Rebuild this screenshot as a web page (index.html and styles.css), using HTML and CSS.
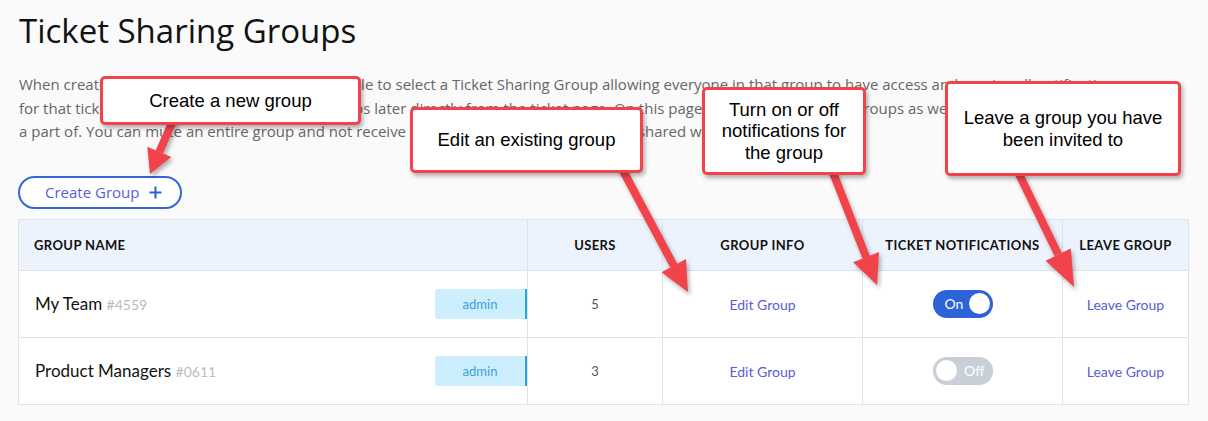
FILE: index.html
```html
<!DOCTYPE html>
<html lang="en">
<head>
    <meta charset="UTF-8">
    <meta name="viewport" content="width=device-width, initial-scale=1.0">
    <title>Ticket Sharing Groups</title>
    <link rel="stylesheet" href="styles.css">
</head>
<body>
    <main class="page">
        <h1 class="title">Ticket Sharing Groups</h1>
        <p class="intro">When creating any new ticket, you will now be able to select a Ticket Sharing Group allowing everyone in that group to have access and receive all notifications<br>
            for that ticket. You can always add users to groups later directly from the ticket page. On this page you can view all your groups as well as the groups that you are<br>
            a part of. You can mute an entire group and not receive notifications for all of the tickets shared with that group.</p>

        <button class="create-btn" type="button">
            Create Group
            <svg width="13" height="13" viewBox="0 0 13 13"><path d="M6.5 0.5v12M0.5 6.5h12" stroke="#2f5fcf" stroke-width="2" fill="none"/></svg>
        </button>

        <table class="groups">
            <colgroup>
                <col class="col-name">
                <col class="col-users">
                <col class="col-info">
                <col class="col-notify">
                <col class="col-leave">
            </colgroup>
            <thead>
                <tr>
                    <th class="th-name">Group Name</th>
                    <th>Users</th>
                    <th>Group Info</th>
                    <th>Ticket Notifications</th>
                    <th>Leave Group</th>
                </tr>
            </thead>
            <tbody>
                <tr>
                    <td class="cell-name">
                        <div class="name-wrap">
                            <span class="group-name">My Team <span class="group-id">#4559</span></span>
                            <span class="role">admin</span>
                        </div>
                    </td>
                    <td class="users">5</td>
                    <td><a class="link" href="#">Edit Group</a></td>
                    <td><span class="toggle on"><span class="toggle-label">On</span><span class="knob"></span></span></td>
                    <td><a class="link" href="#">Leave Group</a></td>
                </tr>
                <tr>
                    <td class="cell-name">
                        <div class="name-wrap">
                            <span class="group-name">Product Managers <span class="group-id">#0611</span></span>
                            <span class="role">admin</span>
                        </div>
                    </td>
                    <td class="users">3</td>
                    <td><a class="link" href="#">Edit Group</a></td>
                    <td><span class="toggle off"><span class="knob"></span><span class="toggle-label">Off</span></span></td>
                    <td><a class="link" href="#">Leave Group</a></td>
                </tr>
            </tbody>
        </table>
    </main>

    <!-- help overlay: arrows first, boxes on top -->
    <svg class="arrows" width="1208" height="421" viewBox="0 0 1208 421">
        <g stroke="#f2434b" stroke-width="8" fill="none">
            <line x1="174.5" y1="117" x2="159.3" y2="152"/>
            <line x1="620" y1="165" x2="673.7" y2="265.6"/>
            <line x1="830" y1="165" x2="866.1" y2="257.1"/>
            <line x1="1017" y1="170" x2="1058.2" y2="254.6"/>
        </g>
        <g fill="#f2434b">
            <polygon points="150,174 171.3,157 147.3,146.8"/>
            <polygon points="688,292 686,258.9 661.4,272.3"/>
            <polygon points="877,285 879.1,252 853.1,262.2"/>
            <polygon points="1074,287 1070.8,248.5 1045.6,260.7"/>
        </g>
    </svg>

    <div class="note note-create">Create a new group</div>
    <div class="note note-edit">Edit an existing group</div>
    <div class="note note-notify">Turn on or off<br>notifications for<br>the group</div>
    <div class="note note-leave">Leave a group you have<br>been invited to</div>
</body>
</html>
```

FILE: styles.css
```css
body {
    margin: 0;
    background-color: #fafafa;
    font-family: "Open Sans", Arial, sans-serif;
    color: #111;
}
.page {
    padding: 0 18px;
}
.title {
    font-size: 33px;
    font-weight: 400;
    line-height: 40px;
    margin: 11px 0 0 1px;
    color: #111;
}
.intro {
    font-size: 15px;
    line-height: 23.5px;
    color: #666;
    margin: 22px 0 0 1px;
}
.create-btn {
    display: flex;
    align-items: center;
    gap: 10px;
    margin-top: 32px;
    height: 33px;
    width: 164px;
    box-sizing: border-box;
    padding: 0 0 0 25px;
    border: 2px solid #3566d6;
    border-radius: 17px;
    background: #fff;
    color: #5660d8;
    font-family: "Open Sans", Arial, sans-serif;
    font-size: 15px;
    cursor: pointer;
}
.groups {
    margin-top: 10px;
    width: 1170px;
    table-layout: fixed;
    border-collapse: collapse;
    background: #fff;
    font-family: Lato, "Open Sans", sans-serif;
}
.col-name { width: 509px; }
.col-users { width: 135px; }
.col-info { width: 200px; }
.col-notify { width: 200px; }
.col-leave { width: 126px; }
.groups th,
.groups td {
    border: 1px solid #dfe3e8;
    text-align: center;
    padding: 0;
}
.groups th {
    height: 50px;
    background: #ecf3fd;
    font-size: 13px;
    font-weight: 700;
    text-transform: uppercase;
    letter-spacing: 0.4px;
    color: #111;
}
.groups th.th-name {
    text-align: left;
    padding-left: 15px;
}
.groups td {
    height: 66px;
}
.groups td.cell-name {
    padding-left: 16px;
}
.name-wrap {
    display: flex;
    align-items: center;
    justify-content: space-between;
}
.group-name {
    font-size: 17px;
    color: #111;
}
.group-id {
    font-size: 14px;
    color: #bbb;
}
.role {
    display: flex;
    align-items: center;
    justify-content: center;
    width: 92px;
    height: 30px;
    box-sizing: border-box;
    background: #cdeefc;
    border-right: 2px solid #1ea5ee;
    border-radius: 3px 0 0 3px;
    color: #3a9fdc;
    font-size: 13px;
}
.users {
    font-size: 13px;
    color: #555;
}
.link {
    color: #5b5bd6;
    font-size: 14px;
    text-decoration: none;
}
.toggle {
    display: inline-flex;
    align-items: center;
    justify-content: space-between;
    width: 60px;
    height: 28px;
    box-sizing: border-box;
    border-radius: 14px;
    padding: 0 3px;
    vertical-align: middle;
}
.toggle.on {
    background: #2c63d6;
    padding-left: 12px;
}
.toggle.off {
    background: #c8cfd6;
    padding-right: 8px;
}
.toggle-label {
    color: #fff;
    font-size: 14px;
}
.knob {
    width: 21px;
    height: 21px;
    border-radius: 50%;
    background: #fff;
}
.arrows {
    position: absolute;
    left: 0;
    top: 0;
    pointer-events: none;
    filter: drop-shadow(2px 3px 2px rgba(0, 0, 0, 0.3));
}
.note {
    position: absolute;
    display: flex;
    align-items: center;
    justify-content: center;
    text-align: center;
    box-sizing: border-box;
    background: #fff;
    border: 3px solid #f2434b;
    border-radius: 5px;
    box-shadow: 2px 3px 4px rgba(0, 0, 0, 0.3);
    font-family: "Liberation Sans", Arial, sans-serif;
    font-size: 18.5px;
    line-height: 21.5px;
    color: #000;
}
.note-create { left: 100px; top: 76px; width: 261px; height: 49px; }
.note-edit { left: 410px; top: 107px; width: 233px; height: 66px; }
.note-notify { left: 702px; top: 87px; width: 164px; height: 88px; }
.note-leave { left: 945px; top: 81px; width: 236px; height: 95px; }
```
